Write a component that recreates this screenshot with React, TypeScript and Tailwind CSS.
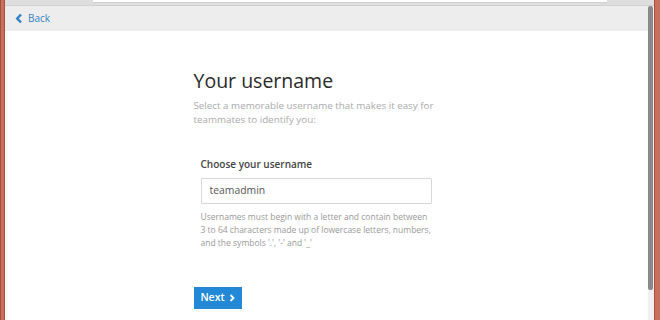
import React from 'react'

const font = { fontFamily: '"Open Sans", "Noto Sans", sans-serif' }

function ChevronLeft() {
  return (
    <svg width="8" height="11" viewBox="0 0 8 11" className="mr-[5px]">
      <path d="M6 1.5 L2.2 5.5 L6 9.5" fill="none" stroke="#2f81c5" strokeWidth="2.4" />
    </svg>
  )
}

function ChevronRight() {
  return (
    <svg width="6" height="8" viewBox="0 0 6 8" className="ml-[4px]">
      <path d="M1.5 1 L4.5 4 L1.5 7" fill="none" stroke="#fff" strokeWidth="1.8" />
    </svg>
  )
}

export default function App() {
  return (
    <div className="w-[660px] h-[320px] flex overflow-hidden bg-white" style={font}>
      <div className="w-[5px] bg-[#c9705d] border-l border-r border-[#a8503f]" />
      <div className="flex-1 flex flex-col">
        <div className="h-[6px] bg-[#dedede] relative border-b border-[#d0d0d0]">
          <div className="absolute left-[88px] top-0 w-[514px] h-[3px] bg-white border-b border-[#cfcfcf]" />
        </div>
        <div className="flex-1 flex">
          <div className="flex-1 flex flex-col">
            <div className="h-[25px] bg-[#ededed] flex items-center pl-[10px] text-[10px] text-[#2f81c5]">
              <ChevronLeft />
              <span>Back</span>
            </div>
            <div className="flex-1 bg-white">
              <div className="w-[266px] mx-auto pt-[37px]">
                <h1 className="text-[19.5px] leading-[26px] text-[#2a2a2a]">Your username</h1>
                <p className="mt-[5px] text-[9.8px] leading-[13.5px] text-[#aaa] whitespace-nowrap">
                  Select a memorable username that makes it easy for
                  <br />
                  teammates to identify you:
                </p>
                <div className="pl-[7px] pt-[31px]">
                  <div className="text-[10px] font-semibold text-[#444] leading-[14px]">Choose your username</div>
                  <div className="mt-[7px] w-[231px] h-[26px] border border-[#d8d8d8] rounded-[1px] flex items-center pl-[8px] text-[10.4px] text-[#555]">
                    teamadmin
                  </div>
                  <p className="mt-[6px] text-[8.5px] leading-[13px] text-[#999] whitespace-nowrap">
                    Usernames must begin with a letter and contain between
                    <br />
                    3 to 64 characters made up of lowercase letters, numbers,
                    <br />
                    and the symbols '.', '-' and '_'
                  </p>
                </div>
                <button className="mt-[38px] w-[48px] h-[22px] bg-[#2389d7] text-white text-[10.5px] font-semibold flex items-center justify-center">
                  Next
                  <ChevronRight />
                </button>
              </div>
            </div>
          </div>
          <div className="w-[6px] bg-[#f0f0f0] flex flex-col">
            <div className="h-[284px] bg-[#8a8a8a] rounded-[2px] w-[5px]" />
          </div>
        </div>
      </div>
      <div className="w-[6px] bg-[#c9705d] border-l border-[#a8503f]" />
    </div>
  )
}
